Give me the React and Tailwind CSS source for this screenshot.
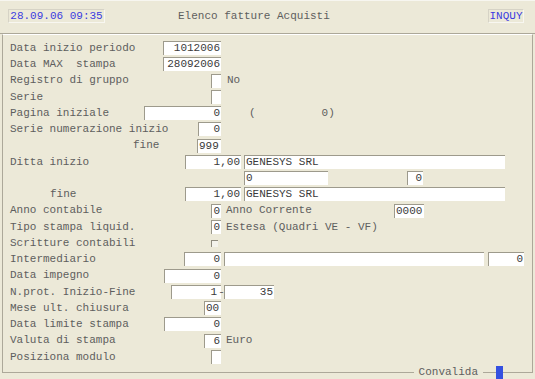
const mono = { fontFamily: '"Liberation Mono", "DejaVu Sans Mono", monospace' }

const Box = ({ w, children, left, className = '' }) => (
  <div
    className={`h-[14px] bg-white border-t border-l border-[#9d9a8c] flex items-center text-[#3a3a3a] whitespace-pre leading-none ${left ? 'justify-start pl-[1px]' : 'justify-end pr-[1px]'} ${className}`}
    style={{ width: w }}
  >
    {children}
  </div>
)

const Row = ({ label, box, children, indent = 0 }) => (
  <div className="flex items-center h-[16.25px]">
    <div className="w-[211px] flex items-center justify-between shrink-0">
      <span className="whitespace-pre" style={{ paddingLeft: indent }}>{label}</span>
      {box}
    </div>
    {children}
  </div>
)

export default function App() {
  return (
    <div className="w-[535px] h-[379px] bg-[#ECE9D8] text-[11px] text-[#5e5e5e] overflow-hidden" style={mono}>
      <div className="h-[34px] flex items-start pt-[8px] pl-[8px] pr-[11px] border-b border-[#aca899] border-t border-t-[#f7f6f0]">
        <div className="w-[97px] h-[14px] border border-[#f8f7f1] border-t-[#d6d3c6] border-l-[#d6d3c6] flex items-center justify-center text-[#3b3be0] leading-none">
          28.09.06 09:35
        </div>
        <div className="ml-[73px] h-[14px] flex items-center leading-none">Elenco fatture Acquisti</div>
        <div className="ml-auto w-[36px] h-[14px] border border-[#f8f7f1] border-t-[#d6d3c6] border-l-[#d6d3c6] flex items-center justify-center text-[#3b3be0] leading-none">
          INQUY
        </div>
      </div>

      <div className="mx-[2px] h-[332px] border-x border-[#aca899] border-t border-t-white pl-[7px] pt-[5px]">
        <Row label="Data inizio periodo" box={<Box w={58}>1012006</Box>} />
        <Row label="Data MAX  stampa" box={<Box w={58}>28092006</Box>} />
        <Row label="Registro di gruppo" box={<Box w={10} />}>
          <span className="ml-[6px]">No</span>
        </Row>
        <Row label="Serie" box={<Box w={10} />} />
        <Row label="Pagina iniziale" box={<Box w={77}>0</Box>}>
          <span className="ml-[28px]">(</span>
          <span className="ml-[66px]">0)</span>
        </Row>
        <Row label="Serie numerazione inizio" box={<Box w={23}>0</Box>} />
        <Row label="fine" indent={123} box={<Box w={24} left>999</Box>} />
        <div className="flex items-center h-[16.25px]">
          <span className="w-[175px] shrink-0">Ditta inizio</span>
          <Box w={56}>1,00</Box>
          <Box w={261} left className="ml-[3px]">GENESYS SRL</Box>
        </div>
        <div className="flex items-center h-[16.25px]">
          <div className="w-[234px] shrink-0" />
          <Box w={84} left>0</Box>
          <Box w={16} className="ml-[79px]">0</Box>
        </div>
        <div className="flex items-center h-[16.25px]">
          <span className="w-[175px] shrink-0 pl-[40px]">fine</span>
          <Box w={56}>1,00</Box>
          <Box w={261} left className="ml-[3px]">GENESYS SRL</Box>
        </div>
        <Row label="Anno contabile" box={<Box w={10}>0</Box>}>
          <span className="ml-[5px] w-[168px] shrink-0">Anno Corrente</span>
          <Box w={30} left>0000</Box>
        </Row>
        <Row label="Tipo stampa liquid." box={<Box w={10}>0</Box>}>
          <span className="ml-[5px]">Estesa (Quadri VE - VF)</span>
        </Row>
        <Row
          label="Scritture contabili"
          box={<div className="w-[7px] h-[7px] mr-[3px] border-t border-l border-[#8f8c7f] bg-[#f4f3ec]" />}
        />
        <Row label="Intermediario" box={<Box w={37}>0</Box>}>
          <Box w={260} className="ml-[3px]" />
          <Box w={36} className="ml-[4px]">0</Box>
        </Row>
        <Row label="Data impegno" box={<Box w={57}>0</Box>} />
        <Row label="N.prot. Inizio-Fine" box={<Box w={50} className="pr-[4px]">1</Box>}>
          <div className="w-[3px] flex justify-center overflow-visible">
            <span className="-ml-[2px]">-</span>
          </div>
          <Box w={50}>35</Box>
        </Row>
        <Row label="Mese ult. chiusura" box={<Box w={17} left>00</Box>} />
        <Row label="Data limite stampa" box={<Box w={57}>0</Box>} />
        <Row label="Valuta di stampa" box={<Box w={17}>6</Box>}>
          <span className="ml-[5px]">Euro</span>
        </Row>
        <Row label="Posiziona modulo" box={<Box w={10} />} />
      </div>

      <div className="flex items-start h-[13px] mx-[2px]">
        <div className="flex-1 h-[7px] border-l border-b border-[#aca899]" />
        <span className="px-[5px] leading-[13px]">Convalida</span>
        <div className="w-[13px] h-[7px] border-b border-[#aca899]" />
        <div className="w-[7px] h-[13px] bg-[#3450e0]" />
        <div className="w-[30px] h-[7px] border-r border-b border-[#aca899]" />
      </div>
    </div>
  )
}
